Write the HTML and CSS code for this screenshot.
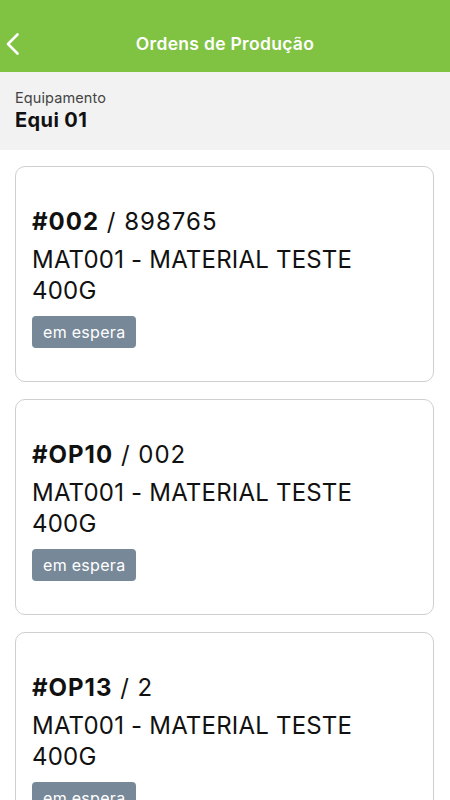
FILE: index.html
```html
<!DOCTYPE html>
<html lang="pt">
<head>
<meta charset="utf-8">
<title>Ordens de Produção</title>
<link rel="stylesheet" href="styles.css">
</head>
<body>
<header class="topbar">
  <button class="back" aria-label="Voltar">
    <svg width="16" height="24" viewBox="0 0 16 24"><path d="M12.5 2.5 L3 12 L12.5 21.5" fill="none" stroke="#fff" stroke-width="2.6" stroke-linecap="round" stroke-linejoin="round"/></svg>
  </button>
  <h1 class="title">Ordens de Produção</h1>
</header>
<section class="equip">
  <div class="equip-label">Equipamento</div>
  <div class="equip-name">Equi 01</div>
</section>
<main class="list">
  <article class="card">
    <div class="card-title"><strong>#002</strong> / 898765</div>
    <div class="card-desc">MAT001 - MATERIAL TESTE 400G</div>
    <span class="badge">em espera</span>
  </article>
  <article class="card">
    <div class="card-title"><strong>#OP10</strong> / 002</div>
    <div class="card-desc">MAT001 - MATERIAL TESTE 400G</div>
    <span class="badge">em espera</span>
  </article>
  <article class="card">
    <div class="card-title"><strong>#OP13</strong> / 2</div>
    <div class="card-desc">MAT001 - MATERIAL TESTE 400G</div>
    <span class="badge">em espera</span>
  </article>
</main>
</body>
</html>
```
FILE: styles.css
```css
* { box-sizing: border-box; }
html, body { margin: 0; padding: 0; }
body {
  font-family: Inter, "Noto Sans", "Liberation Sans", sans-serif;
  background: #fff;
  color: #111;
  width: 450px;
  overflow: hidden;
}
.topbar {
  height: 72px;
  background: #80c242;
  display: flex;
  align-items: center;
  justify-content: center;
  position: relative;
  padding-top: 16px;
}
.back {
  position: absolute;
  left: 5px;
  top: 32px;
  background: none;
  border: 0;
  padding: 0;
  width: 16px;
  height: 24px;
  display: flex;
}
.title {
  margin: 0;
  color: #fff;
  font-size: 17.5px;
  font-weight: 600;
  line-height: 24px;
  letter-spacing: 0.3px;
}
.equip {
  background: #f2f2f2;
  height: 78px;
  padding: 17px 15px 0;
}
.equip-label {
  font-size: 14.5px;
  line-height: 18px;
  color: #444;
  letter-spacing: 0.1px;
}
.equip-name {
  font-size: 20px;
  font-weight: 700;
  line-height: 26px;
  color: #111;
  letter-spacing: 0.4px;
}
.list {
  padding: 16px 16px 0 15px;
  display: flex;
  flex-direction: column;
  gap: 17px;
}
.card {
  border: 1px solid #cfcfcf;
  border-radius: 10px;
  padding: 40px 16px 31px;
  display: flex;
  flex-direction: column;
  align-items: flex-start;
  height: 216px;
  flex-shrink: 0;
}
.card-title {
  font-size: 24px;
  line-height: 30px;
  color: #111;
  letter-spacing: 1px;
}
.card-title strong { font-weight: 700; }
.card-desc {
  margin-top: 7px;
  font-size: 24px;
  line-height: 31px;
  color: #111;
  max-width: 340px;
  letter-spacing: 0.2px;
}
.badge {
  margin-top: 10px;
  background: #778899;
  color: #fff;
  font-size: 16px;
  line-height: 32px;
  height: 32px;
  padding: 0 11px;
  border-radius: 4px;
  letter-spacing: 0.3px;
}
```
